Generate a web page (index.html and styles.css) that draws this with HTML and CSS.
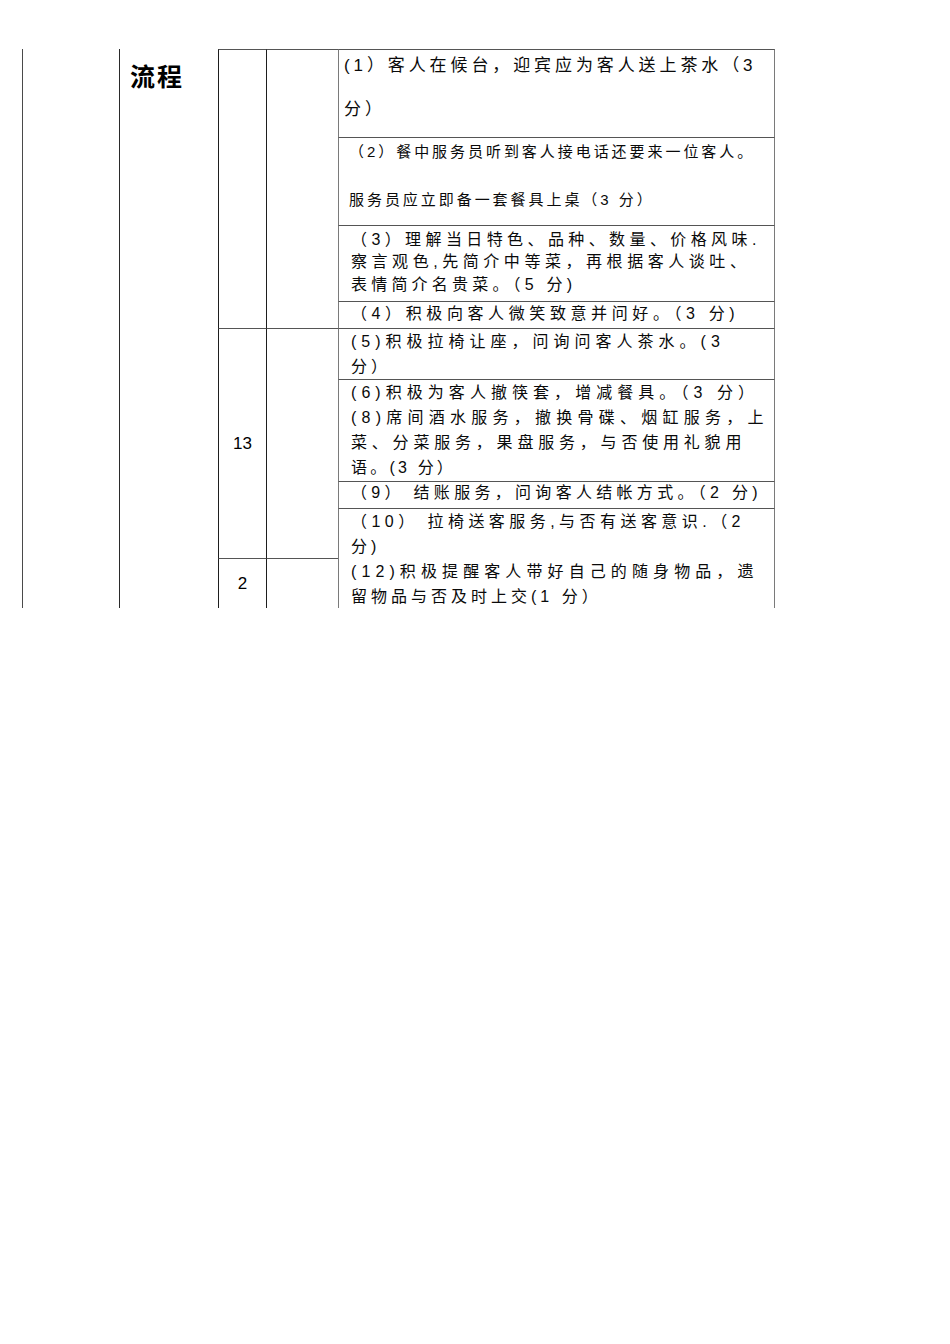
FILE: index.html
```html
<!DOCTYPE html>
<html lang="zh-CN">
<head>
<meta charset="utf-8">
<title>流程</title>
<link rel="stylesheet" href="styles.css">
</head>
<body>
<div class="sheet">
  <div class="cell col-a"></div>
  <div class="cell col-b"><span class="title">流程</span></div>
  <div class="cell num top c-top"></div>
  <div class="cell blank top d-top"></div>

  <div class="cell item top e1">
    <span class="ln r1a">(1）客人在候台，迎宾应为客人送上茶水（3</span>
    <span class="ln r1b">分）</span>
  </div>
  <div class="cell item top e2">
    <span class="ln r2a">（2）餐中服务员听到客人接电话还要来一位客人。</span>
    <span class="ln r2b">服务员应立即备一套餐具上桌（3 分）</span>
  </div>
  <div class="cell item top e3">
    <span class="ln r3a">（3）理解当日特色、品种、数量、价格风味.</span>
    <span class="ln r3b">察言观色,先简介中等菜，再根据客人谈吐、</span>
    <span class="ln r3c">表情简介名贵菜。（5 分)</span>
  </div>
  <div class="cell item top e4">
    <span class="ln r4a">（4）积极向客人微笑致意并问好。（3 分)</span>
  </div>

  <div class="cell num top c-mid">13</div>
  <div class="cell blank top d-mid"></div>

  <div class="cell item top e5">
    <span class="ln r5a">(5)积极拉椅让座，问询问客人茶水。(3</span>
    <span class="ln r5b">分）</span>
  </div>
  <div class="cell item top e6">
    <span class="ln r6a">(6)积极为客人撤筷套，增减餐具。（3 分）</span>
    <span class="ln r6b">(8)席间酒水服务，撤换骨碟、烟缸服务，上</span>
    <span class="ln r6c">菜、分菜服务，果盘服务，与否使用礼貌用</span>
    <span class="ln r6d">语。(3 分）</span>
  </div>
  <div class="cell item top e7">
    <span class="ln r7a">（9） 结账服务，问询客人结帐方式。（2 分)</span>
  </div>
  <div class="cell item top e8">
    <span class="ln r8a">（10） 拉椅送客服务,与否有送客意识.（2</span>
    <span class="ln r8b">分)</span>
    <span class="ln r8c">(12)积极提醒客人带好自己的随身物品，遗</span>
    <span class="ln r8d">留物品与否及时上交(1 分）</span>
  </div>

  <div class="cell num top c-bot">2</div>
  <div class="cell blank top d-bot"></div>
</div>
</body>
</html>
```

FILE: styles.css
```css
html, body {
  margin: 0;
  padding: 0;
  background: #ffffff;
}

body {
  font-family: "Liberation Sans", "Noto Sans CJK SC", sans-serif;
  color: #0a0a0a;
}

.sheet {
  display: grid;
  grid-template-columns: 97px 99px 48px 72px 437px;
  grid-template-rows: 88px 88px 76px 27px 51px 102px 27px 50px 50px;
  width: max-content;
  margin: 49px 0 0 22px;
}

.cell {
  box-sizing: border-box;
  border-left: 1px solid #3a3a3a;
  min-width: 0;
}

.top {
  border-top: 1px solid #555555;
}

/* left wide columns */
.col-a {
  grid-column: 1;
  grid-row: 1 / 10;
  border-left-color: #4a4a4a;
}

.col-b {
  grid-column: 2;
  grid-row: 1 / 10;
  border-left-color: #2a2a2a;
  padding: 7px 0 0 10px;
}

.title {
  display: block;
  font-family: "Noto Sans CJK SC", sans-serif;
  font-weight: 700;
  font-size: 25px;
  line-height: 38px;
  letter-spacing: 2px;
  color: #000;
}

/* number column */
.num {
  grid-column: 3;
  border-left-color: #1e1e1e;
  display: flex;
  align-items: center;
  justify-content: center;
  font-size: 17px;
  color: #000;
}

.blank {
  grid-column: 4;
  border-left-color: #1e1e1e;
}

.c-top, .d-top { grid-row: 1 / 5; }
.c-mid, .d-mid { grid-row: 5 / 9; }
.c-bot, .d-bot { grid-row: 9; }

/* item column */
.item {
  grid-column: 5;
  border-left-color: #7a7a7a;
  border-right: 1px solid #7a7a7a;
  padding-left: 12px;
  white-space: nowrap;
  font-size: 16px;
  line-height: 25px;
  overflow: hidden;
}

.ln {
  display: block;
}

.e1 { grid-row: 1; padding-left: 5px; font-size: 17px; letter-spacing: 3.9px; }
.e2 { grid-row: 2; padding-left: 10px; font-size: 15px; letter-spacing: 2.95px; }
.e3 { grid-row: 3; padding-top: 3px; line-height: 22.3px; }
.e4 { grid-row: 4; line-height: 24px; }
.e5 { grid-row: 5; }
.e6 { grid-row: 6; }
.e7 { grid-row: 7; line-height: 22px; }
.e8 { grid-row: 8 / 10; }

.r1a { line-height: 31px; }
.r1b { line-height: 33px; margin-top: 12px; }
.r2a { line-height: 27px; }
.r2b { line-height: 29px; margin-top: 20px; }

.r3a { letter-spacing: 4.4px; }
.r3b { letter-spacing: 4.55px; }
.r3c { letter-spacing: 4.2px; }
.r4a { letter-spacing: 4.6px; }
.r5a { letter-spacing: 5px; }
.r5b { letter-spacing: 4px; }
.r6a { letter-spacing: 5.05px; }
.r6b { letter-spacing: 5.25px; }
.r6c { letter-spacing: 4.8px; }
.r6d { letter-spacing: 3.2px; }
.r7a { letter-spacing: 4.3px; }
.r8a { letter-spacing: 4.45px; }
.r8b { letter-spacing: 4px; }
.r8c { letter-spacing: 5.1px; }
.r8d { letter-spacing: 4px; }
```
